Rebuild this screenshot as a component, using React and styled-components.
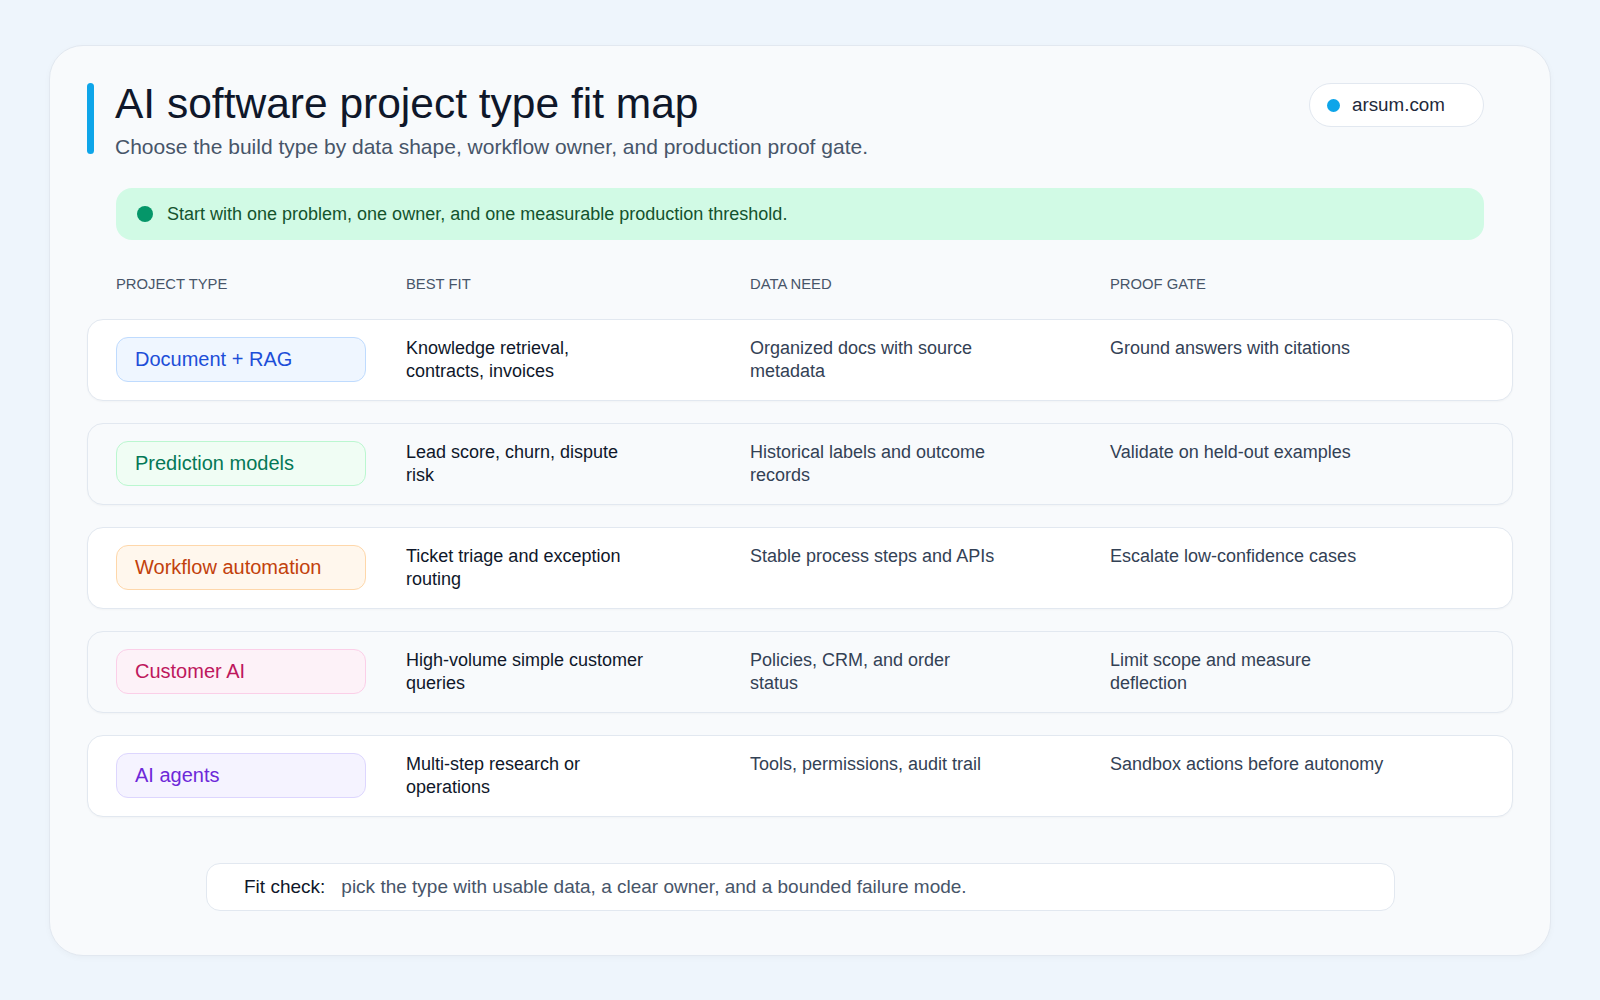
import React from "react";
import styled, { createGlobalStyle } from "styled-components";

const Global = createGlobalStyle`
  html, body { margin: 0; padding: 0; background: #eef5fc; }
  body { font-family: "Liberation Sans", Arial, sans-serif; color: #0f172a; }
`;

const Page = styled.div`
  width: 1600px; height: 1000px; box-sizing: border-box;
  padding: 45px 49px 44px 49px;
`;
const Card = styled.div`
  height: 100%; box-sizing: border-box;
  background: #f8fafc; border: 1px solid #e2e8f0; border-radius: 34px;
  padding: 34px 37px 0 37px;
  box-shadow: 0 2px 6px rgba(15,23,42,0.03);
`;
const Header = styled.div`
  display: flex; justify-content: space-between; align-items: flex-start;
`;
const TitleBlock = styled.div`
  display: flex; gap: 21px;
`;
const Accent = styled.div`
  width: 7px; height: 71px; margin-top: 3px; border-radius: 4px; background: #0ea5e9;
`;
const Title = styled.h1`
  margin: 0; font-size: 42.5px; font-weight: 400; line-height: 48px; color: #0f172a;
`;
const Subtitle = styled.p`
  margin: 7px 0 0; font-size: 21px; color: #475569; line-height: 24px;
`;
const Badge = styled.div`
  display: flex; align-items: center; gap: 12px; width: 175px; height: 44px; box-sizing: border-box;
  border: 1px solid #e2e8f0; border-radius: 22px; background: #fff; padding-left: 17px;
  font-size: 18.8px; color: #1e293b; margin-top: 3px; margin-right: 29px;
`;
const Dot = styled.span`
  width: ${p => p.$s || 13}px; height: ${p => p.$s || 13}px; border-radius: 50%; background: ${p => p.$c};
  flex: none;
`;
const Inner = styled.div`
  padding-left: 29px; padding-right: 29px;
`;
const Banner = styled.div`
  margin-top: 29px; height: 52px; border-radius: 16px; background: #d1fae5;
  display: flex; align-items: center; gap: 14px; padding-left: 21px;
  font-size: 18px; color: #14532d;
`;
const Cols = styled.div`
  display: grid; grid-template-columns: 290px 344px 360px 1fr;
`;
const HeadRow = styled(Cols)`
  margin-top: 36px; margin-bottom: 27px; font-size: 14.8px; color: #475569;
`;
const Rows = styled.div`
  display: flex; flex-direction: column; gap: 22px;
`;
const Row = styled(Cols)`
  height: 82px; box-sizing: border-box; border: 1px solid #e2e8f0; border-radius: 16px;
  background: ${p => p.$alt ? "#f8fafc" : "#fff"};
  padding: 17px 29px 0 28px; box-shadow: 0 1px 2px rgba(15,23,42,0.03);
  font-size: 18px; line-height: 23px;
`;
const Pill = styled.div`
  width: 250px; height: 45px; box-sizing: border-box; border-radius: 12px;
  border: 1px solid ${p => p.$b}; background: ${p => p.$bg}; color: ${p => p.$c};
  display: flex; align-items: center; padding-left: 18px; font-size: 20px; margin-top: 0;
`;
const Cell = styled.div`
  color: ${p => p.$c || "#1e293b"}; max-width: ${p => p.$w || 260}px;
`;
const Footer = styled.div`
  margin: 46px 118px 0 119px; height: 48px; box-sizing: border-box; background: #fff;
  border: 1px solid #e2e8f0; border-radius: 14px; display: flex; align-items: center;
  padding-left: 37px; font-size: 19px; color: #475569;
`;
const FooterLabel = styled.span`
  color: #0f172a; margin-right: 16px;
`;

const rows = [
  ["Document + RAG", "#eff6ff", "#bfdbfe", "#1d4ed8", "Knowledge retrieval, contracts, invoices", "Organized docs with source metadata", "Ground answers with citations"],
  ["Prediction models", "#f0fdf4", "#bbf7d0", "#047857", "Lead score, churn, dispute risk", "Historical labels and outcome records", "Validate on held-out examples"],
  ["Workflow automation", "#fff7ed", "#fed7aa", "#c2410c", "Ticket triage and exception routing", "Stable process steps and APIs", "Escalate low-confidence cases"],
  ["Customer AI", "#fdf2f8", "#fbcfe8", "#be185d", "High-volume simple customer queries", "Policies, CRM, and order status", "Limit scope and measure deflection"],
  ["AI agents", "#f5f3ff", "#ddd6fe", "#6d28d9", "Multi-step research or operations", "Tools, permissions, audit trail", "Sandbox actions before autonomy"],
];

export default function App() {
  return (
    <Page>
      <Global />
      <Card>
        <Header>
          <TitleBlock>
            <Accent />
            <div>
              <Title>AI software project type fit map</Title>
              <Subtitle>Choose the build type by data shape, workflow owner, and production proof gate.</Subtitle>
            </div>
          </TitleBlock>
          <Badge><Dot $c="#0ea5e9" $s={13} />arsum.com</Badge>
        </Header>
        <Inner>
          <Banner><Dot $c="#059669" $s={16} />Start with one problem, one owner, and one measurable production threshold.</Banner>
          <HeadRow>
            <div>PROJECT TYPE</div><div>BEST FIT</div><div>DATA NEED</div><div>PROOF GATE</div>
          </HeadRow>
        </Inner>
        <Rows>
          {rows.map((r, i) => (
            <Row key={r[0]} $alt={i % 2 === 1}>
              <div><Pill $bg={r[1]} $b={r[2]} $c={r[3]}>{r[0]}</Pill></div>
              <Cell $c="#0f172a" $w={240}>{r[4]}</Cell>
              <Cell $c="#334155" $w={250}>{r[5]}</Cell>
              <Cell $c="#334155" $w={278}>{r[6]}</Cell>
            </Row>
          ))}
        </Rows>
        <Footer><FooterLabel>Fit check:</FooterLabel>pick the type with usable data, a clear owner, and a bounded failure mode.</Footer>
      </Card>
    </Page>
  );
}
